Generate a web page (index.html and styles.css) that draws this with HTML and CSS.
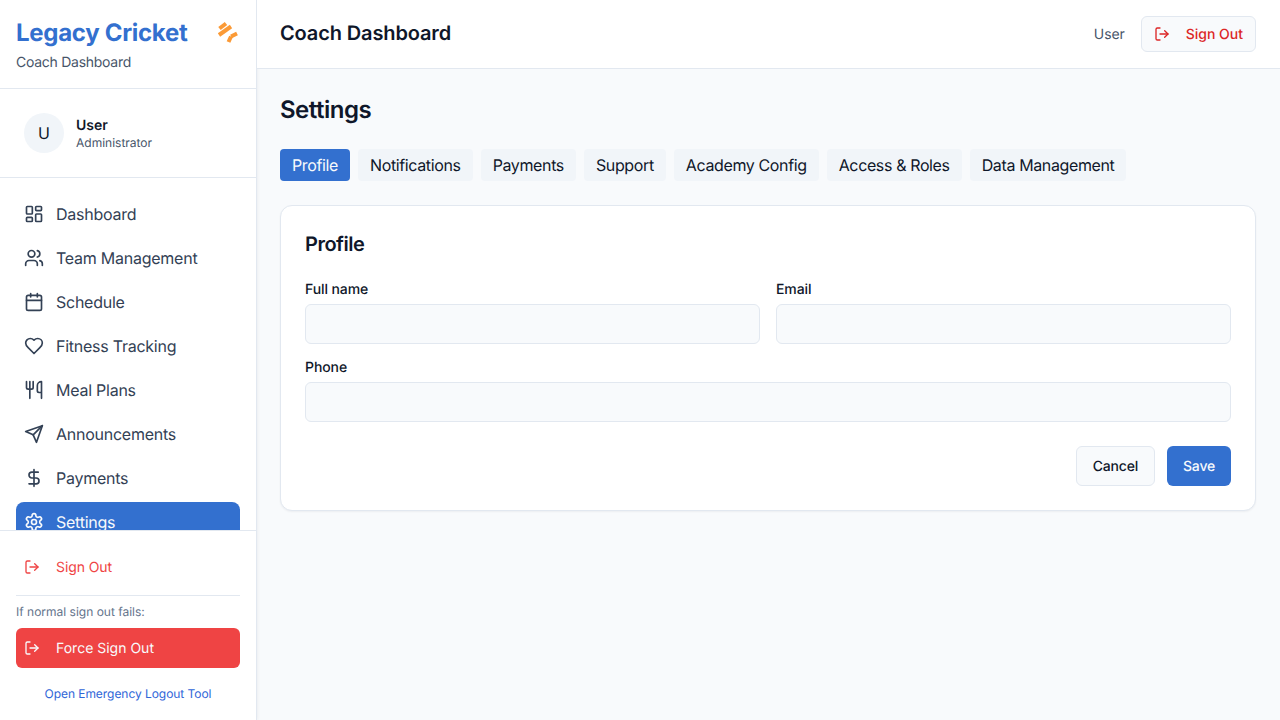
FILE: index.html
```html
<!DOCTYPE html>
<html>
<head>
  <meta charset="UTF-8">
  <meta name="viewport" content="width=device-width, initial-scale=1">
  <title>Coach Dashboard</title>
  <link rel="stylesheet" href="styles.css">
</head>
<body>
  <aside class="sidebar">
    <div class="brand">
      <div class="brand-row">
        <span class="brand-name">Legacy Cricket</span>
        <svg class="brand-icon" viewBox="0 0 24 24" fill="none" stroke="currentColor" stroke-width="4" stroke-linejoin="round">
          <path d="M3.500 7.500 10 2.500"/>
          <path d="M3 14 15 5.500"/>
          <path d="M12.500 21 15 15.500"/>
          <path d="M15 15.500 21 12.500"/>
        </svg>
      </div>
      <p class="brand-sub">Coach Dashboard</p>
    </div>

    <div class="profile">
      <div class="avatar">U</div>
      <div>
        <div class="profile-name">User</div>
        <div class="profile-role">Administrator</div>
      </div>
    </div>

    <nav class="nav">
      <a class="nav-item">
        <svg class="icon" viewBox="0 0 24 24"><rect x="3" y="3" width="7" height="9" rx="1"/><rect x="14" y="3" width="7" height="5" rx="1"/><rect x="14" y="12" width="7" height="9" rx="1"/><rect x="3" y="16" width="7" height="5" rx="1"/></svg>
        Dashboard
      </a>
      <a class="nav-item">
        <svg class="icon" viewBox="0 0 24 24"><path d="M16 21v-2a4 4 0 0 0-4-4H6a4 4 0 0 0-4 4v2"/><circle cx="9" cy="7" r="4"/><path d="M22 21v-2a4 4 0 0 0-3-3.870"/><path d="M16 3.130a4 4 0 0 1 0 7.750"/></svg>
        Team Management
      </a>
      <a class="nav-item">
        <svg class="icon" viewBox="0 0 24 24"><path d="M8 2v4"/><path d="M16 2v4"/><rect x="3" y="4" width="18" height="18" rx="2"/><path d="M3 10h18"/></svg>
        Schedule
      </a>
      <a class="nav-item">
        <svg class="icon" viewBox="0 0 24 24"><path d="M19 14c1.490-1.460 3-3.210 3-5.500A5.500 5.500 0 0 0 16.500 3c-1.760 0-3 .5-4.500 2-1.500-1.500-2.740-2-4.500-2A5.500 5.500 0 0 0 2 8.500c0 2.300 1.500 4.050 3 5.500l7 7Z"/></svg>
        Fitness Tracking
      </a>
      <a class="nav-item">
        <svg class="icon" viewBox="0 0 24 24"><path d="M3 2v7c0 1.100.9 2 2 2h4a2 2 0 0 0 2-2V2"/><path d="M7 2v20"/><path d="M21 15V2a5 5 0 0 0-5 5v6c0 1.100.9 2 2 2h3Zm0 0v7"/></svg>
        Meal Plans
      </a>
      <a class="nav-item">
        <svg class="icon" viewBox="0 0 24 24"><path d="m22 2-7 20-4-9-9-4Z"/><path d="M22 2 11 13"/></svg>
        Announcements
      </a>
      <a class="nav-item">
        <svg class="icon" viewBox="0 0 24 24"><path d="M12 2v20"/><path d="M17 5H9.500a3.500 3.500 0 0 0 0 7h5a3.500 3.500 0 0 1 0 7H6"/></svg>
        Payments
      </a>
      <a class="nav-item active">
        <svg class="icon" viewBox="0 0 24 24"><path d="M12.220 2h-.44a2 2 0 0 0-2 2v.18a2 2 0 0 1-1 1.730l-.43.25a2 2 0 0 1-2 0l-.15-.08a2 2 0 0 0-2.730.73l-.22.380a2 2 0 0 0 .73 2.730l.15.1a2 2 0 0 1 1 1.720v.51a2 2 0 0 1-1 1.740l-.15.09a2 2 0 0 0-.73 2.730l.22.380a2 2 0 0 0 2.730.73l.15-.08a2 2 0 0 1 2 0l.43.25a2 2 0 0 1 1 1.730V20a2 2 0 0 0 2 2h.44a2 2 0 0 0 2-2v-.18a2 2 0 0 1 1-1.730l.43-.25a2 2 0 0 1 2 0l.15.08a2 2 0 0 0 2.730-.73l.22-.390a2 2 0 0 0-.73-2.730l-.15-.08a2 2 0 0 1-1-1.740v-.5a2 2 0 0 1 1-1.740l.15-.09a2 2 0 0 0 .73-2.730l-.22-.380a2 2 0 0 0-2.730-.73l-.15.08a2 2 0 0 1-2 0l-.43-.25a2 2 0 0 1-1-1.730V4a2 2 0 0 0-2-2z"/><circle cx="12" cy="12" r="3"/></svg>
        Settings
      </a>
    </nav>

    <div class="side-footer">
      <a class="signout">
        <svg class="icon" viewBox="0 0 24 24"><path d="M9 21H5a2 2 0 0 1-2-2V5a2 2 0 0 1 2-2h4"/><polyline points="16 17 21 12 16 7"/><line x1="21" y1="12" x2="9" y2="12"/></svg>
        Sign Out
      </a>
      <div class="emergency">
        <p class="emergency-note">If normal sign out fails:</p>
        <a class="force">
          <svg class="icon" viewBox="0 0 24 24"><path d="M9 21H5a2 2 0 0 1-2-2V5a2 2 0 0 1 2-2h4"/><polyline points="16 17 21 12 16 7"/><line x1="21" y1="12" x2="9" y2="12"/></svg>
          Force Sign Out
        </a>
        <a class="emergency-link">Open Emergency Logout Tool</a>
      </div>
    </div>
  </aside>

  <div class="main">
    <header class="topbar">
      <h1>Coach Dashboard</h1>
      <div class="topbar-right">
        <span class="topbar-user">User</span>
        <button class="top-signout">
          <svg class="icon" viewBox="0 0 24 24"><path d="M9 21H5a2 2 0 0 1-2-2V5a2 2 0 0 1 2-2h4"/><polyline points="16 17 21 12 16 7"/><line x1="21" y1="12" x2="9" y2="12"/></svg>
          Sign Out
        </button>
      </div>
    </header>

    <main class="content">
      <h2 class="page-title">Settings</h2>
      <div class="tabs">
        <button class="tab active">Profile</button>
        <button class="tab">Notifications</button>
        <button class="tab">Payments</button>
        <button class="tab">Support</button>
        <button class="tab">Academy Config</button>
        <button class="tab">Access &amp; Roles</button>
        <button class="tab">Data Management</button>
      </div>

      <section class="card">
        <h3>Profile</h3>
        <div class="form-grid">
          <div class="field">
            <label for="fullName">Full name</label>
            <input id="fullName" type="text">
          </div>
          <div class="field">
            <label for="email">Email</label>
            <input id="email" type="text">
          </div>
          <div class="field wide">
            <label for="phone">Phone</label>
            <input id="phone" type="text">
          </div>
        </div>
        <div class="actions">
          <button class="btn-cancel">Cancel</button>
          <button class="btn-save">Save</button>
        </div>
      </section>
    </main>
  </div>
</body>
</html>
```

FILE: styles.css
```css
* {
  box-sizing: border-box;
}

body {
  margin: 0;
  height: 720px;
  overflow: hidden;
  display: flex;
  background-color: #f8fafc;
  color: #0f172a;
  font-family: Inter, "Liberation Sans", sans-serif;
  text-rendering: geometricPrecision;
}

p,
h1,
h2,
h3 {
  margin: 0;
}

button {
  font-family: inherit;
  text-rendering: inherit;
}

.icon {
  width: 20px;
  height: 20px;
  flex: none;
  fill: none;
  stroke: currentColor;
  stroke-width: 2;
  stroke-linecap: round;
  stroke-linejoin: round;
}

/* sidebar */
.sidebar {
  width: 257px;
  height: 720px;
  flex: none;
  display: flex;
  flex-direction: column;
  background-color: #fff;
  border-right: 1px solid #e2e8f0;
  box-shadow: 1px 0 3px rgba(15, 23, 42, 0.05);
}

.brand {
  height: 89px;
  flex: none;
  padding: 17px 16px 0;
  border-bottom: 1px solid #e2e8f0;
}

.brand-row {
  display: flex;
  align-items: center;
  justify-content: space-between;
}

.brand-name {
  color: #3370cf;
  font-size: 24px;
  font-weight: 700;
  line-height: 32px;
  letter-spacing: -0.3px;
}

.brand-icon {
  width: 24px;
  height: 24px;
  color: #fb9a36;
}

.brand-sub {
  margin-top: 4px;
  color: #475569;
  font-size: 14px;
  line-height: 20px;
  letter-spacing: -0.27px;
}

.profile {
  height: 89px;
  flex: none;
  display: flex;
  align-items: center;
  gap: 12px;
  padding: 0 24px;
  border-bottom: 1px solid #e2e8f0;
}

.avatar {
  width: 40px;
  height: 40px;
  display: flex;
  align-items: center;
  justify-content: center;
  border-radius: 50%;
  background-color: #f1f5f9;
  font-size: 16px;
}

.profile-name {
  margin: 1px 0 -1px;
  font-size: 14px;
  font-weight: 600;
  line-height: 20px;
}

.profile-role {
  color: #475569;
  font-size: 12px;
  line-height: 16px;
}

.nav {
  flex: 1;
  min-height: 0;
  overflow: hidden;
  display: flex;
  flex-direction: column;
  gap: 4px;
  padding: 16px 16px 0;
}

.nav-item {
  height: 40px;
  flex: none;
  display: flex;
  align-items: center;
  gap: 12px;
  padding: 0 8px;
  border-radius: 8px;
  color: #334155;
  font-size: 16px;
  letter-spacing: -0.25px;
}

.nav-item.active {
  background-color: #3370cf;
  color: #f8fafc;
}

.side-footer {
  height: 190px;
  flex: none;
  padding: 16px 16px 0;
  border-top: 1px solid #e2e8f0;
}

.signout {
  height: 40px;
  display: flex;
  align-items: center;
  gap: 16px;
  padding: 0 8px;
  color: #ef4444;
  font-size: 14px;
  letter-spacing: -0.1px;
}

.signout .icon,
.force .icon {
  width: 16px;
  height: 16px;
}

.emergency {
  margin-top: 8px;
  padding-top: 8px;
  border-top: 1px solid #e2e8f0;
}

.emergency-note {
  color: #64748b;
  font-size: 12px;
  line-height: 16px;
}

.force {
  height: 40px;
  display: flex;
  align-items: center;
  gap: 16px;
  margin-top: 8px;
  padding: 0 8px;
  border-radius: 6px;
  background-color: #ef4444;
  color: #f8fafc;
  font-size: 14px;
}

.emergency-link {
  display: block;
  margin-top: 18px;
  color: #2f66d8;
  font-size: 12px;
  line-height: 16px;
  letter-spacing: -0.05px;
  text-align: center;
}

/* main area */
.main {
  flex: 1;
  min-width: 0;
}

.topbar {
  height: 69px;
  display: flex;
  align-items: center;
  justify-content: space-between;
  padding: 0 24px 0 23px;
  background-color: #fff;
  border-bottom: 1px solid #e2e8f0;
}

.topbar h1 {
  margin-bottom: 2px;
  font-size: 20px;
  font-weight: 600;
  line-height: 28px;
  letter-spacing: -0.13px;
}

.topbar-right {
  display: flex;
  align-items: center;
  gap: 16px;
}

.topbar-user {
  color: #475569;
  font-size: 14px;
  letter-spacing: -0.1px;
}

.top-signout {
  height: 36px;
  display: flex;
  align-items: center;
  gap: 16px;
  padding: 0 12px;
  background-color: #f8fafc;
  border: 1px solid #e2e8f0;
  border-radius: 6px;
  color: #dc2626;
  font-size: 14px;
  font-weight: 500;
}

.top-signout .icon {
  width: 16px;
  height: 16px;
}

.content {
  padding: 25px 24px 0 23px;
}

.page-title {
  font-size: 24px;
  font-weight: 600;
  line-height: 32px;
  letter-spacing: -0.5px;
}

.tabs {
  display: flex;
  gap: 8px;
  margin-top: 23px;
}

.tab {
  height: 32px;
  padding: 0 12px;
  background-color: #f1f5f9;
  border: none;
  border-radius: 4px;
  color: #0f172a;
  font-size: 16px;
  letter-spacing: -0.37px;
}

.tab.active {
  background-color: #3370cf;
  color: #f8fafc;
}

.card {
  margin-top: 24px;
  padding: 24px;
  background-color: #fff;
  border: 1px solid #e2e8f0;
  border-radius: 12px;
  box-shadow: 0 1px 2px rgba(15, 23, 42, 0.05);
}

.card h3 {
  font-size: 20px;
  font-weight: 600;
  line-height: 28px;
  letter-spacing: -0.5px;
}

.form-grid {
  display: grid;
  grid-template-columns: 1fr 1fr;
  gap: 13px 16px;
  margin-top: 21px;
}

.field label {
  display: block;
  margin-bottom: 4px;
  padding-top: 1px;
  font-size: 14px;
  font-weight: 500;
  line-height: 20px;
  letter-spacing: -0.1px;
}

.field input {
  display: block;
  width: 100%;
  height: 40px;
  background-color: #f8fafc;
  border: 1px solid #e2e8f0;
  border-radius: 6px;
}

.field.wide {
  grid-column: span 2;
}

.actions {
  display: flex;
  justify-content: flex-end;
  gap: 12px;
  margin-top: 24px;
}

.btn-cancel,
.btn-save {
  height: 40px;
  padding: 0 16px;
  border-radius: 6px;
  font-size: 14px;
  font-weight: 500;
  letter-spacing: -0.2px;
}

.btn-cancel {
  background-color: #f8fafc;
  border: 1px solid #e2e8f0;
  color: #0f172a;
}

.btn-save {
  background-color: #3370cf;
  border: none;
  color: #f8fafc;
}
```
